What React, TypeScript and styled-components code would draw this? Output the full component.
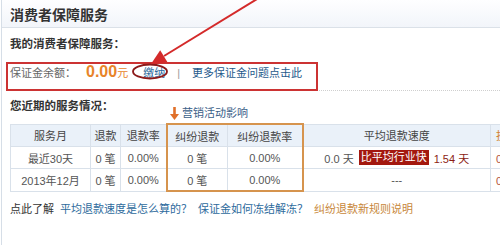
import React from "react";
import styled, { createGlobalStyle } from "styled-components";

const Global = createGlobalStyle`
  html, body { margin: 0; padding: 0; background: #fff; }
  body { width: 500px; height: 245px; overflow: hidden; }
`;

const Page = styled.div`
  position: relative;
  width: 500px;
  height: 245px;
  overflow: hidden;
  background: #fff;
  font-family: "Liberation Sans", "Noto Sans CJK SC", sans-serif;
  font-size: 11px;
  color: #555;
`;

const Panel = styled.div`
  margin-left: 1px;
  height: 100%;
  border-left: 1px solid #d6dee7;
`;

const Header = styled.div`
  height: 27px;
  display: flex;
  align-items: center;
  padding-left: 8px;
  border-bottom: 1px solid #dbe1e8;
  background: linear-gradient(#fefeff, #f2f5fa);
`;

const Title = styled.h1`
  margin: 0;
  font-family: "Noto Sans CJK SC", sans-serif;
  font-size: 14px;
  line-height: 16px;
  font-weight: bold;
  color: #333;
`;

const Content = styled.div`
  padding-left: 8px;
`;

const SectionLabel = styled.div`
  margin-top: 8px;
  line-height: 16px;
  font-size: 11.5px;
  font-weight: bold;
  color: #333;
`;

const BalanceRow = styled.div`
  display: flex;
  align-items: baseline;
  box-sizing: border-box;
  height: 39px;
  padding-top: 12px;
  line-height: 16px;
  border-bottom: 1px dotted #cfcfcf;
`;

const BalanceLabel = styled.span`
  color: #666;
`;

const Amount = styled.span`
  margin-left: 10px;
  font-family: "Liberation Sans", sans-serif;
  font-size: 16px;
  font-weight: bold;
  color: #e8842a;
`;

const Unit = styled.span`
  color: #e8842a;
`;

const Link = styled.a<{ $tone?: "blue" | "dark" | "orange" }>`
  color: ${(p) =>
    p.$tone === "orange" ? "#c8873a" : p.$tone === "dark" ? "#1f5a8c" : "#2d6a9c"};
  text-decoration: none;
  cursor: pointer;
`;

const PayLink = styled(Link)`
  margin-left: 15px;
`;

const Separator = styled.span`
  margin: 0 12px;
  color: #999;
`;

const SummaryHead = styled.div`
  display: flex;
  align-items: flex-start;
  height: 25px;
  margin-top: 7px;
`;

const SummaryLabel = styled(SectionLabel)`
  margin-top: 0;
  width: 160px;
`;

const Note = styled.div`
  display: flex;
  align-items: center;
  gap: 3px;
  margin-top: 7px;
  line-height: 16px;
  color: #3a6088;
`;

const Table = styled.table`
  border-collapse: collapse;
  width: 560px;
  table-layout: fixed;
  color: #555;
`;

const Cell = styled.td<{ $box?: "left" | "right"; $top?: boolean; $bottom?: boolean; $tail?: boolean }>`
  height: 21px;
  padding: 0;
  text-align: ${(p) => (p.$tail ? "left" : "center")};
  padding-left: ${(p) => (p.$tail ? "5px" : "0")};
  border: 1px solid #d9e1ea;
  white-space: nowrap;
  color: ${(p) => (p.$tail ? "#b5533c" : "inherit")};
  ${(p) => (p.$box === "left" ? "border-left: 2px solid #d6944e;" : "")}
  ${(p) => (p.$box === "right" ? "border-right: 2px solid #d6944e;" : "")}
  ${(p) => (p.$top ? "border-top: 2px solid #d6944e;" : "")}
  ${(p) => (p.$bottom ? "border-bottom: 2px solid #d6944e;" : "")}
`;

const HeadCell = styled(Cell).attrs({ as: "th" })`
  font-weight: normal;
  background: #eaf1f9;
  color: ${(p) => (p.$tail ? "#d2822e" : "#444")};
`;

const Speed = styled.span`
  display: inline-flex;
  align-items: center;
`;

const Badge = styled.span`
  margin: 0 5px;
  padding: 0 2px;
  line-height: 15px;
  background: #a3180f;
  color: #fff;
`;

const Fast = styled.span`
  color: #8c1c13;
`;

const Footer = styled.div`
  margin-top: 9px;
  line-height: 16px;
  color: #333;
`;

const FooterLink = styled(Link)`
  margin-left: 6px;
`;

const Overlay = styled.svg`
  position: absolute;
  left: 0;
  top: 0;
  width: 500px;
  height: 245px;
  pointer-events: none;
`;

const DownArrow = () => (
  <svg width="9" height="13" viewBox="0 0 9 13">
    <rect x="3.2" y="0" width="2.6" height="8" fill="#e0702a" />
    <polygon points="0,7 9,7 4.5,13" fill="#e0702a" />
  </svg>
);

const cols = [80, 30, 46, 61, 75, 188, 80];

export default function App() {
  return (
    <Page>
      <Global />
      <Panel>
        <Header>
          <Title>消费者保障服务</Title>
        </Header>
        <Content>
          <SectionLabel>我的消费者保障服务：</SectionLabel>
          <BalanceRow>
            <BalanceLabel>保证金余额：</BalanceLabel>
            <Amount>0.00</Amount>
            <Unit>元</Unit>
            <PayLink>缴纳</PayLink>
            <Separator>|</Separator>
            <Link $tone="dark">更多保证金问题点击此</Link>
          </BalanceRow>
          <SummaryHead>
            <SummaryLabel>您近期的服务情况：</SummaryLabel>
            <Note>
              <DownArrow />
              营销活动影响
            </Note>
          </SummaryHead>
          <Table>
            <colgroup>
              {cols.map((w, i) => (
                <col key={i} style={{ width: w }} />
              ))}
            </colgroup>
            <thead>
              <tr>
                <HeadCell>服务月</HeadCell>
                <HeadCell>退款</HeadCell>
                <HeadCell>退款率</HeadCell>
                <HeadCell $box="left" $top>纠纷退款</HeadCell>
                <HeadCell $box="right" $top>纠纷退款率</HeadCell>
                <HeadCell>平均退款速度</HeadCell>
                <HeadCell $tail>投诉处理</HeadCell>
              </tr>
            </thead>
            <tbody>
              <tr>
                <Cell>最近30天</Cell>
                <Cell>0 笔</Cell>
                <Cell>0.00%</Cell>
                <Cell $box="left">0 笔</Cell>
                <Cell $box="right">0.00%</Cell>
                <Cell>
                  <Speed>
                    0.0 天<Badge>比平均行业快</Badge>
                    <Fast>1.54 天</Fast>
                  </Speed>
                </Cell>
                <Cell $tail>0 笔</Cell>
              </tr>
              <tr>
                <Cell>2013年12月</Cell>
                <Cell>0 笔</Cell>
                <Cell>0.00%</Cell>
                <Cell $box="left" $bottom>0 笔</Cell>
                <Cell $box="right" $bottom>0.00%</Cell>
                <Cell>---</Cell>
                <Cell $tail>0 笔</Cell>
              </tr>
            </tbody>
          </Table>
          <Footer>
            点此了解
            <FooterLink>平均退款速度是怎么算的？</FooterLink>
            <FooterLink>保证金如何冻结解冻？</FooterLink>
            <FooterLink $tone="orange">纠纷退款新规则说明</FooterLink>
          </Footer>
        </Content>
      </Panel>
      <Overlay viewBox="0 0 500 245">
        <rect x="7" y="63" width="310" height="27" fill="none" stroke="#cc3333" strokeWidth="2" />
        <ellipse cx="150" cy="71.5" rx="17" ry="7" fill="none" stroke="#8c1a1a" strokeWidth="1.8" />
        <line x1="262" y1="-4" x2="164" y2="56" stroke="#d42a2a" strokeWidth="2" />
        <polygon points="151,64 167.5,62.2 160.2,50.2" fill="#d42a2a" />
      </Overlay>
    </Page>
  );
}
